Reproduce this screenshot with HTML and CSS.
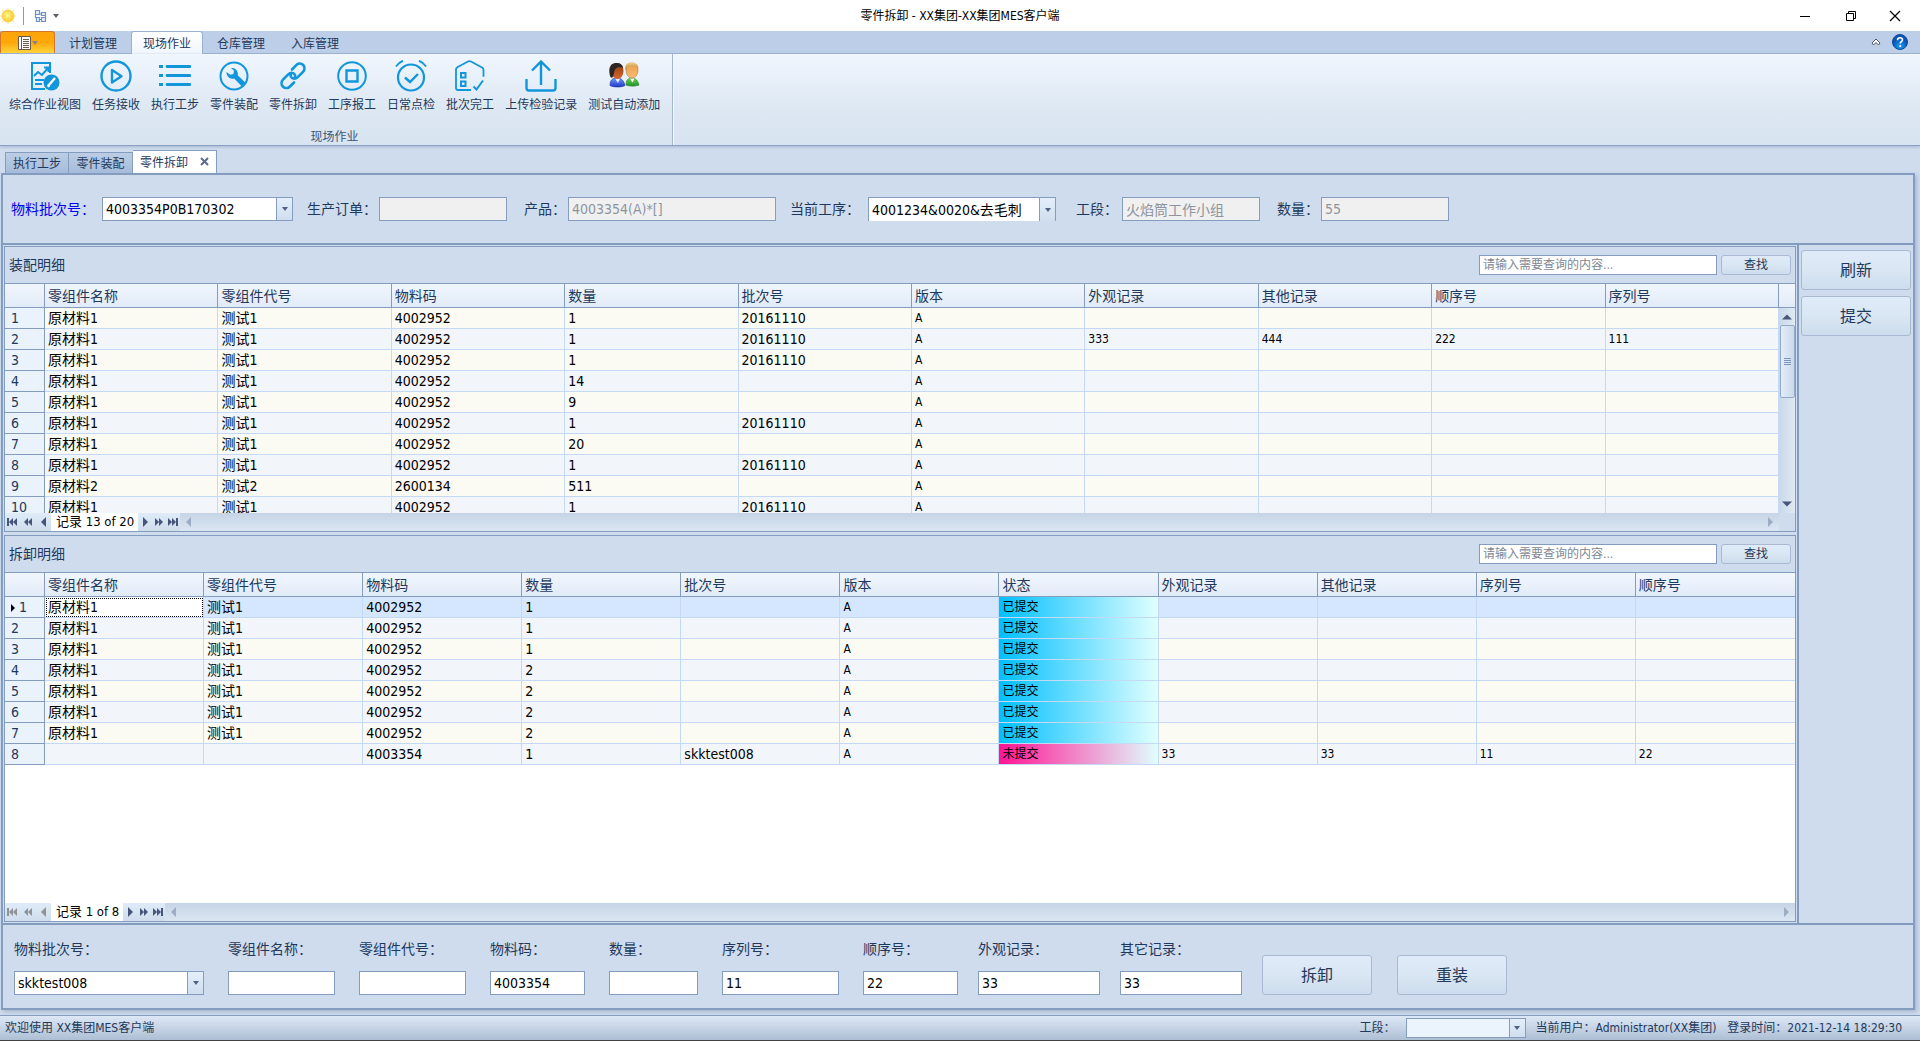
FILE: index.html
```html
<!DOCTYPE html>
<html lang="zh-CN">
<head>
<meta charset="utf-8">
<title>零件拆卸 - XX集团-XX集团MES客户端</title>
<link rel="stylesheet" href="styles.css">
</head>
<body>
<svg class="defs" aria-hidden="true">
  <defs>
    <symbol id="nav-prev" viewBox="0 0 10 10"><path d="M7 0v10L2 5z"/></symbol>
    <symbol id="nav-rew" viewBox="0 0 10 10"><path d="M5 1v8L1 5zM9 1v8L5 5z"/></symbol>
    <symbol id="nav-first" viewBox="0 0 10 10"><path d="M0 1h2v8H0zM6 1v8L2 5zM10 1v8L6 5z"/></symbol>
    <symbol id="nav-next" viewBox="0 0 10 10"><path d="M3 0v10l5-5z"/></symbol>
    <symbol id="nav-fwd" viewBox="0 0 10 10"><path d="M1 1v8l4-4zM5 1v8l4-4z"/></symbol>
    <symbol id="nav-last" viewBox="0 0 10 10"><path d="M8 1h2v8H8zM0 1v8l4-4zM4 1v8l4-4z"/></symbol>
    <radialGradient id="sun" cx="45%" cy="45%"><stop offset="0" stop-color="#fff79a"/><stop offset="1" stop-color="#f6cf28"/></radialGradient>
    <radialGradient id="help" cx="50%" cy="80%"><stop offset="0" stop-color="#1ea0f5"/><stop offset="1" stop-color="#0a55b8"/></radialGradient>
    <linearGradient id="skin-dark" x2="0" y2="1"><stop offset="0" stop-color="#8a3a10"/><stop offset="1" stop-color="#d8662c"/></linearGradient>
    <linearGradient id="skin-light" x2="0" y2="1"><stop offset="0" stop-color="#e89a4a"/><stop offset="1" stop-color="#fbbd72"/></linearGradient>
    <linearGradient id="hair" x2="0" y2="1"><stop offset="0" stop-color="#efcf8c"/><stop offset="1" stop-color="#b9822c"/></linearGradient>
    <linearGradient id="shirt-blue" x2="0" y2="1"><stop offset="0" stop-color="#6d9bff"/><stop offset="1" stop-color="#2338c8"/></linearGradient>
    <linearGradient id="shirt-green" x2="0" y2="1"><stop offset="0" stop-color="#6fd04a"/><stop offset="1" stop-color="#1f9430"/></linearGradient>
  </defs>
</svg>

<header class="titlebar">
  <div class="quick">
    <svg width="16" height="16" viewBox="0 0 16 16"><g stroke="#fbe58a" stroke-width="1"><path d="M8 0v16M0 8h16M2 2l12 12M14 2L2 14"/></g><circle cx="8" cy="8" r="6" fill="url(#sun)" stroke="#f4d254"/></svg>
    <span class="quick-sep"></span>
    <button class="plain" aria-label="布局"><svg width="14" height="14" viewBox="0 0 14 14" fill="#e6eef8" stroke="#6f93c0" stroke-width="1.200"><path d="M1.500 1.500h4v4h-4zM7.500 3.500h4v3h-4zM2.500 8.500h3v4h-3zM7.500 8.500h4v4h-4z"/><path fill="none" d="M1.500 5.500v3h1M5.500 5h2M5.500 10.500h2M11.500 6.500v2"/></svg></button>
    <span class="tri tri-grey"></span>
  </div>
  <h1 class="title">零件拆卸 - XX集团-XX集团MES客户端</h1>
  <div class="winbtns">
    <button class="plain" aria-label="最小化"><svg width="12" height="12" viewBox="0 0 12 12"><path d="M1 6.500h10" stroke="#000"/></svg></button>
    <button class="plain" aria-label="还原"><svg width="12" height="12" viewBox="0 0 12 12" fill="none" stroke="#000"><path d="M1.500 3.500h7v7h-7zM3.500 3.500v-2h7v7h-2"/></svg></button>
    <button class="plain" aria-label="关闭"><svg width="12" height="12" viewBox="0 0 12 12"><path d="M1 1l10 10M11 1L1 11" stroke="#000" stroke-width="1.200"/></svg></button>
  </div>
</header>

<nav class="ribbon-tabs">
  <button class="app-btn" aria-label="应用程序菜单">
    <svg width="13" height="14" viewBox="0 0 13 14"><path d="M.5.5h12v13H.5z" fill="#fff" stroke="#6b5a45"/><path d="M3.500 1v12M5 3.500h6M5 5.500h6M5 7.500h6M5 9.500h6M5 11.500h6" stroke="#6b5a45"/></svg>
    <span class="tri"></span>
  </button>
  <button class="rtab">计划管理</button>
  <button class="rtab active">现场作业</button>
  <button class="rtab">仓库管理</button>
  <button class="rtab">入库管理</button>
  <span class="spacer"></span>
  <button class="plain" aria-label="折叠功能区"><svg width="10" height="8" viewBox="0 0 10 8"><path d="M1 5l4-4 4 4-1.500 2L5 4.500 2.500 7z" fill="#fff" stroke="#4c566c"/></svg></button>
  <button class="plain help" aria-label="帮助"><svg width="16" height="16" viewBox="0 0 16 16"><circle cx="8" cy="8" r="7.500" fill="url(#help)" stroke="#0b4a9c"/><path d="M5.500 6.200C5.500 2.800 10.700 3 10.500 6 10.400 7.600 8.200 7.700 8.200 9.600" fill="none" stroke="#fff" stroke-width="1.600"/><circle cx="8.200" cy="12" r="1" fill="#fff"/></svg></button>
</nav>

<section class="ribbon">
  <div class="rgroup">
    <div class="ritems">
      <button class="ritem"><svg class="ico" viewBox="0 0 32 32"><path d="M21 13V3H3v26h13" /><path d="M5 16l4-4 4 3 6-7M15 7.500h4.500V12M6 20h9M6 24h7"/><circle cx="22.500" cy="22.500" r="8" fill="#1296db" stroke="none"/><path d="M19 26l7-8M18.500 26.500l2-1" stroke="#fff" stroke-width="2.400"/></svg>综合作业视图</button>
      <button class="ritem"><svg class="ico" viewBox="0 0 32 32"><circle cx="16" cy="16" r="14.500" stroke-width="2.400"/><path d="M12 10v12.500l9.500-6.300z" stroke-width="2.400" stroke-linejoin="round"/></svg>任务接收</button>
      <button class="ritem"><svg class="ico" viewBox="0 0 32 32"><path stroke-width="2.800" d="M8 6.500h23M8 15.500h23M8 24.500h23" stroke-linecap="round"/><path stroke-width="3.200" d="M0 6.500h4M0 15.500h4M0 24.500h4"/></svg>执行工步</button>
      <button class="ritem"><svg class="ico" viewBox="0 0 32 32"><circle cx="16" cy="16" r="13.500"/><path fill="#1296db" stroke="none" d="M13 8c3-.6 6 1.400 6.700 4.400.3 1.200.2 2 0 2.900l7.800 7.500-3.600 3.800-7.700-8.200c-3 .9-6-.6-7.200-3.400-.4-1-.5-2-.4-3l3.600 2.800 3.200-.9.600-3.200z"/></svg>零件装配</button>
      <button class="ritem"><svg class="ico" viewBox="0 0 32 32"><path stroke-width="2.600" stroke-linecap="round" d="M15 9.500l4-4.200c2-2 5-2.300 7-.5 2 1.900 2 4.900 0 7l-5.500 5.600c-2 1.900-5 1.900-6.500-.6-.6-1.200-.3-2.800.8-4M17 22.500l-4 4c-2 2-5 2-7 .2-1.900-2-1.900-4.900 0-7l5.500-5.500c2-2 4.700-1.900 6.300.4.700 1.300.4 2.900-.8 4.100"/></svg>零件拆卸</button>
      <button class="ritem"><svg class="ico" viewBox="0 0 32 32"><circle cx="16" cy="16" r="13.800"/><path stroke-width="2.400" d="M10.500 10.500h11v11h-11z"/></svg>工序报工</button>
      <button class="ritem"><svg class="ico" viewBox="0 0 32 32"><circle cx="16" cy="17.500" r="13" stroke-width="2.200"/><path stroke-width="2.400" d="M10 17.500l5 4.500 8-8"/><path d="M1 6.500C3 3.500 5 2 8 .8M31 6.500C29 3.500 27 2 24 .8"/></svg>日常点检</button>
      <button class="ritem"><svg class="ico" viewBox="0 0 32 32"><path d="M17 30H4c-1.500 0-2-1-2-2V9.500c0-1 .5-1.700 1.300-2.200L14 1.500c1-.5 2-.5 3 0l11 6c1 .6 1.500 1.200 1.500 2.200v7" stroke-width="1.800"/><path d="M7 13h4.500v4.500H7zM7 21.500h4.500V26H7zM19.500 26.500l3 3 6.500-9"/></svg>批次完工</button>
      <button class="ritem"><svg class="ico" viewBox="0 0 32 32"><path stroke-width="2.400" d="M1.500 19v9c0 1.500.8 2.500 2.500 2.500h24c1.700 0 2.500-1 2.500-2.500v-9M16 25V2M7 10.500L16 1.500l9 9"/></svg>上传检验记录</button>
      <button class="ritem"><svg class="people" viewBox="0 0 32 32"><path d="M18 25c0-5 2-7 6-7s6 3 7 7c-3 1.500-10 1.500-13 0z" fill="url(#shirt-green)" stroke="#287a28" stroke-width=".6"/><path d="M22 18.500l2.500 4 2-4z" fill="#fff"/><ellipse cx="24" cy="10.500" rx="6" ry="7.500" fill="url(#skin-light)" stroke="#a66a20" stroke-width=".5"/><path d="M17.500 10C16.500 4 19.500 2.500 24 2.500S31 5 30.200 9c-.9-2-1.900-2.500-3-3-3 1-6.200.6-8 1z" fill="url(#hair)"/><path d="M2 25.500c0-5 2-7.500 7-7.500s7 3.500 8 7.500c-4 2-11 2-15 0z" fill="url(#shirt-blue)" stroke="#1c2e9c" stroke-width=".6"/><path d="M7 18.500l3 4.500 2-4.500z" fill="#e8f0ff"/><ellipse cx="9.500" cy="11" rx="6" ry="8" fill="url(#skin-dark)"/><path d="M2 16C-.5 6 4 2.500 9 3c4 .2 6 3 6 5-4-2-7-.8-8.500 2.500C6 13 5.500 16 4.500 17.500 3 18 2.300 17 2 16z" fill="#2b2523"/></svg>测试自动添加</button>
    </div>
    <div class="rcaption">现场作业</div>
  </div>
</section>

<nav class="doc-tabs">
  <button class="dtab">执行工步</button>
  <button class="dtab">零件装配</button>
  <button class="dtab active">零件拆卸<svg width="9" height="9" viewBox="0 0 9 9"><path d="M1 1l7 7M8 1L1 8" stroke="#5a6a90" stroke-width="2"/></svg></button>
</nav>

<main class="main">
  <form class="filters">
    <label class="blue" for="f1">物料批次号：</label>
    <span class="combo w191"><select id="f1"><option>4003354P0B170302</option></select><i class="arrow"></i></span>
    <label for="f2">生产订单：</label><input id="f2" class="w128" disabled>
    <label for="f3" class="lead">产品：</label><input id="f3" class="w208" value="4003354(A)*[]" disabled>
    <label for="f4" class="op">当前工序：</label>
    <span class="combo w188 raised"><select id="f4"><option>4001234&amp;0020&amp;去毛刺</option></select><i class="arrow"></i></span>
    <label for="f5" class="lead wide">工段：</label><input id="f5" class="w138" value="火焰筒工作小组" disabled>
    <label for="f6" class="lead">数量：</label><input id="f6" class="w128" value="55" disabled>
  </form>

  <div class="middle">
    <div class="grids">
      <section class="panel panel-a">
        <div class="panel-head"><h2>装配明细</h2><input class="search" aria-label="查询装配明细" placeholder="请输入需要查询的内容..."><button class="btn find">查找</button></div>
        <div class="body">
          <div class="scroller">
            <table>
              <colgroup><col class="c-ind"><col span="10"></colgroup>
              <thead><tr><th></th><th>零组件名称</th><th>零组件代号</th><th>物料码</th><th>数量</th><th>批次号</th><th>版本</th><th>外观记录</th><th>其他记录</th><th>顺序号</th><th>序列号</th></tr></thead>
              <tbody>
                <tr><th>1</th><td>原材料1</td><td>测试1</td><td>4002952</td><td>1</td><td>20161110</td><td class="s">A</td><td></td><td></td><td></td><td></td></tr>
                <tr><th>2</th><td>原材料1</td><td>测试1</td><td>4002952</td><td>1</td><td>20161110</td><td class="s">A</td><td class="s">333</td><td class="s">444</td><td class="s">222</td><td class="s">111</td></tr>
                <tr><th>3</th><td>原材料1</td><td>测试1</td><td>4002952</td><td>1</td><td>20161110</td><td class="s">A</td><td></td><td></td><td></td><td></td></tr>
                <tr><th>4</th><td>原材料1</td><td>测试1</td><td>4002952</td><td>14</td><td></td><td class="s">A</td><td></td><td></td><td></td><td></td></tr>
                <tr><th>5</th><td>原材料1</td><td>测试1</td><td>4002952</td><td>9</td><td></td><td class="s">A</td><td></td><td></td><td></td><td></td></tr>
                <tr><th>6</th><td>原材料1</td><td>测试1</td><td>4002952</td><td>1</td><td>20161110</td><td class="s">A</td><td></td><td></td><td></td><td></td></tr>
                <tr><th>7</th><td>原材料1</td><td>测试1</td><td>4002952</td><td>20</td><td></td><td class="s">A</td><td></td><td></td><td></td><td></td></tr>
                <tr><th>8</th><td>原材料1</td><td>测试1</td><td>4002952</td><td>1</td><td>20161110</td><td class="s">A</td><td></td><td></td><td></td><td></td></tr>
                <tr><th>9</th><td>原材料2</td><td>测试2</td><td>2600134</td><td>511</td><td></td><td class="s">A</td><td></td><td></td><td></td><td></td></tr>
                <tr><th>10</th><td>原材料1</td><td>测试1</td><td>4002952</td><td>1</td><td>20161110</td><td class="s">A</td><td></td><td></td><td></td><td></td></tr>
              </tbody>
            </table>
          </div>
          <div class="vbar">
            <div class="vbar-head"></div>
            <svg class="varrow" viewBox="0 0 10 6"><path d="M0 5.500L5 .5l5 5z"/></svg>
            <div class="thumb"></div>
            <span class="spacer"></span>
            <svg class="varrow" viewBox="0 0 10 6"><path d="M0 .5l5 5 5-5z"/></svg>
          </div>
        </div>
        <div class="navrow">
          <div class="pager">
            <button class="plain" aria-label="首条"><svg><use href="#nav-first"/></svg></button><button class="plain" aria-label="上一页"><svg><use href="#nav-rew"/></svg></button><button class="plain" aria-label="上一条"><svg><use href="#nav-prev"/></svg></button>
            <span class="record">记录 13 of 20</span>
            <button class="plain" aria-label="下一条"><svg><use href="#nav-next"/></svg></button><button class="plain" aria-label="下一页"><svg><use href="#nav-fwd"/></svg></button><button class="plain" aria-label="末条"><svg><use href="#nav-last"/></svg></button>
          </div>
          <div class="hbar"><svg><use href="#nav-prev"/></svg><svg><use href="#nav-next"/></svg></div>
          <div class="corner"></div>
        </div>
      </section>

      <section class="panel panel-b">
        <div class="panel-head"><h2>拆卸明细</h2><input class="search" aria-label="查询拆卸明细" placeholder="请输入需要查询的内容..."><button class="btn find">查找</button></div>
        <div class="body">
          <div class="scroller">
            <table>
              <colgroup><col class="c-ind"><col span="11"></colgroup>
              <thead><tr><th></th><th>零组件名称</th><th>零组件代号</th><th>物料码</th><th>数量</th><th>批次号</th><th>版本</th><th>状态</th><th>外观记录</th><th>其他记录</th><th>序列号</th><th>顺序号</th></tr></thead>
              <tbody>
                <tr class="selected"><th><i class="cursor"></i>1</th><td class="focus">原材料1</td><td>测试1</td><td>4002952</td><td>1</td><td></td><td class="s">A</td><td class="s done">已提交</td><td></td><td></td><td></td><td></td></tr>
                <tr><th>2</th><td>原材料1</td><td>测试1</td><td>4002952</td><td>1</td><td></td><td class="s">A</td><td class="s done">已提交</td><td></td><td></td><td></td><td></td></tr>
                <tr><th>3</th><td>原材料1</td><td>测试1</td><td>4002952</td><td>1</td><td></td><td class="s">A</td><td class="s done">已提交</td><td></td><td></td><td></td><td></td></tr>
                <tr><th>4</th><td>原材料1</td><td>测试1</td><td>4002952</td><td>2</td><td></td><td class="s">A</td><td class="s done">已提交</td><td></td><td></td><td></td><td></td></tr>
                <tr><th>5</th><td>原材料1</td><td>测试1</td><td>4002952</td><td>2</td><td></td><td class="s">A</td><td class="s done">已提交</td><td></td><td></td><td></td><td></td></tr>
                <tr><th>6</th><td>原材料1</td><td>测试1</td><td>4002952</td><td>2</td><td></td><td class="s">A</td><td class="s done">已提交</td><td></td><td></td><td></td><td></td></tr>
                <tr><th>7</th><td>原材料1</td><td>测试1</td><td>4002952</td><td>2</td><td></td><td class="s">A</td><td class="s done">已提交</td><td></td><td></td><td></td><td></td></tr>
                <tr><th>8</th><td></td><td></td><td>4003354</td><td>1</td><td>skktest008</td><td class="s">A</td><td class="s open">未提交</td><td class="s">33</td><td class="s">33</td><td class="s">11</td><td class="s">22</td></tr>
              </tbody>
            </table>
          </div>
        </div>
        <div class="navrow">
          <div class="pager">
            <button class="plain off" aria-label="首条"><svg><use href="#nav-first"/></svg></button><button class="plain off" aria-label="上一页"><svg><use href="#nav-rew"/></svg></button><button class="plain off" aria-label="上一条"><svg><use href="#nav-prev"/></svg></button>
            <span class="record">记录 1 of 8</span>
            <button class="plain" aria-label="下一条"><svg><use href="#nav-next"/></svg></button><button class="plain" aria-label="下一页"><svg><use href="#nav-fwd"/></svg></button><button class="plain" aria-label="末条"><svg><use href="#nav-last"/></svg></button>
          </div>
          <div class="hbar"><svg><use href="#nav-prev"/></svg><svg><use href="#nav-next"/></svg></div>
        </div>
      </section>
    </div>
    <aside class="actions">
      <button class="btn big">刷新</button>
      <button class="btn big">提交</button>
    </aside>
  </div>

  <form class="edit">
    <div class="field"><label for="e1">物料批次号：</label><span class="combo"><select id="e1"><option>skktest008</option></select><i class="arrow"></i></span></div>
    <div class="field"><label for="e2">零组件名称：</label><input id="e2"></div>
    <div class="field"><label for="e3">零组件代号：</label><input id="e3"></div>
    <div class="field"><label for="e4">物料码：</label><input id="e4" value="4003354"></div>
    <div class="field"><label for="e5">数量：</label><input id="e5"></div>
    <div class="field"><label for="e6">序列号：</label><input id="e6" value="11"></div>
    <div class="field narrow"><label for="e7">顺序号：</label><input id="e7" value="22"></div>
    <div class="field narrow"><label for="e8">外观记录：</label><input id="e8" value="33"></div>
    <div class="field narrow"><label for="e9">其它记录：</label><input id="e9" value="33"></div>
    <div class="edit-btns"><button type="button" class="btn big">拆卸</button><button type="button" class="btn big">重装</button></div>
  </form>
</main>

<footer class="status">
  <span>欢迎使用 XX集团MES客户端</span>
  <span class="spacer"></span>
  <label for="st">工段：</label>
  <span class="combo"><select id="st"><option></option></select><i class="arrow"></i></span>
  <span class="user">当前用户：Administrator(XX集团)</span>
  <span>登录时间：2021-12-14 18:29:30</span>
</footer>
</body>
</html>
```
FILE: styles.css
```css
:root {
  --line: #849dbf;
  --cell: #c3d9f5;
  --bg: #cfdcee;
  --text: #1e395b;
  --blue: #1296db;
}

* { box-sizing: border-box; }

body {
  margin: 0;
  height: 100vh;
  display: flex;
  flex-direction: column;
  overflow: hidden;
  background: var(--bg);
  color: var(--text);
  font-family: "DejaVu Sans Condensed", "Noto Sans CJK SC", sans-serif;
  font-size: 12px;
  line-height: 16px;
}

button, input, select { font: inherit; color: inherit; margin: 0; }
h1, h2 { margin: 0; font-weight: normal; }
.defs { position: absolute; width: 0; height: 0; }
.spacer { flex: 1; }

.plain {
  display: flex;
  align-items: center;
  justify-content: center;
  padding: 0;
  border: 0;
  background: none;
}

.tri {
  border: 3px solid transparent;
  border-top: 4px solid #8d8578;
  border-bottom: 0;
}
.tri-grey { border-top-color: #5a6068; }

/* Title bar */
.titlebar {
  flex: none;
  display: grid;
  grid-template-columns: 1fr auto 1fr;
  align-items: center;
  height: 31px;
  background: #fff;
  color: #000;
}
.quick { display: flex; align-items: center; }
.quick-sep { width: 1px; height: 18px; margin: 0 10px 0 7px; background: #8d99ad; }
.quick .tri { margin-left: 5px; }
.title { font-size: 12px; }
.winbtns { display: flex; justify-content: flex-end; }
.winbtns .plain { width: 46px; height: 28px; }
.winbtns .plain:last-child { padding-right: 4px; }

/* Ribbon */
.ribbon-tabs {
  flex: none;
  display: flex;
  gap: 2px;
  height: 23px;
  padding-right: 3px;
  background: #bdcfe8;
  border-bottom: 1px solid #9ab0cf;
}
.app-btn {
  display: flex;
  align-items: center;
  justify-content: center;
  gap: 1px;
  width: 55px;
  padding: 0;
  border: 1px solid #d3762b;
  border-bottom: 0;
  border-radius: 3px 3px 0 0;
  background: linear-gradient(#fba40c, #fda80a 50%, #ffd33a);
}
.rtab {
  height: 23px;
  padding: 2px 11px 0;
  border: 1px solid transparent;
  border-bottom: 0;
  background: none;
}
.rtab.active {
  border-color: #9ab0cf;
  border-radius: 3px 3px 0 0;
  background: linear-gradient(#fff, #f0f6fd);
}
.help { width: 34px; }
.ribbon {
  flex: none;
  display: flex;
  height: 92px;
  background: linear-gradient(#f0f6fe, #dce7f2 65%, #d8e4f1);
  border-bottom: 1px solid #8b9fbf;
  box-shadow: 0 1px 3px #a7b7cf;
}
.rgroup {
  display: flex;
  flex-direction: column;
  justify-content: space-between;
  padding: 6px 12px 0 9px;
  border-right: 1px solid #a3b5d0;
  box-shadow: 1px 0 #f3f8fe;
}
.ritems { display: flex; gap: 11px; }
.ritem {
  display: flex;
  flex-direction: column;
  align-items: center;
  gap: 5px;
  padding: 0;
  border: 0;
  background: none;
}
.ico { width: 32px; height: 32px; fill: none; stroke: var(--blue); stroke-width: 2; }
.people { width: 32px; height: 32px; }
.rcaption { text-align: center; color: #3b5578; }

/* Document tabs */
.doc-tabs {
  flex: none;
  display: flex;
  align-items: flex-end;
  height: 27px;
  padding-left: 5px;
}
.dtab {
  height: 21px;
  width: 64px;
  padding: 2px 0 0;
  border: 1px solid var(--line);
  border-bottom: 0;
  background: linear-gradient(#bccde4, #a6bcda);
}
.dtab + .dtab { border-left: 0; }
.dtab.active {
  display: flex;
  align-items: flex-start;
  justify-content: space-between;
  width: 84px;
  height: 23px;
  padding: 4px 7px;
  background: #fff;
}
.dtab svg { margin-top: 2px; }

/* Main frame */
.main {
  flex: 1;
  min-height: 0;
  display: flex;
  flex-direction: column;
  margin: 0 5px 5px 1px;
  border: 2px solid var(--line);
  box-shadow: 2px 2px 4px #a9b8d0;
  font-size: 14px;
  line-height: 20px;
}

input, .combo {
  height: 24px;
  border: 1px solid var(--line);
  border-radius: 0;
  background: #fff;
  color: #000;
}
input { padding: 0 3px; outline: 0; }
input:disabled { background: #f0f0f0; color: #8d949e; }
.combo { display: flex; position: relative; }
.combo select {
  flex: 1;
  min-width: 0;
  height: 100%;
  padding: 0 3px;
  border: 0;
  border-radius: 0;
  outline: 0;
  appearance: none;
  background: none;
}
.arrow {
  display: flex;
  align-items: center;
  justify-content: center;
  width: 16px;
  border-left: 1px solid var(--line);
  background: linear-gradient(#e3effb, #cfdeee);
  pointer-events: none;
}
.arrow::before {
  content: "";
  border: 3px solid transparent;
  border-top: 4px solid #4f6285;
  border-bottom: 0;
}

.filters {
  flex: none;
  display: flex;
  align-items: center;
  height: 70px;
  padding: 0 8px;
  border-bottom: 2px solid var(--line);
}
.filters label { width: 72px; margin-left: 14px; white-space: nowrap; }
.filters label.blue { width: 91px; margin-left: 0; color: #0000f0; }
.filters label.lead { width: 44px; margin-left: 17px; }
.filters label.wide { width: 46px; margin-left: 20px; }
.filters label.op { width: 78px; }
.w128 { width: 128px; }
.w138 { width: 138px; }
.w188 { width: 188px; }
.w191 { width: 191px; }
.w208 { width: 208px; }
.combo.raised { border-bottom: 0; }

/* Grids */
.middle {
  flex: 1;
  min-height: 0;
  display: flex;
  border-bottom: 2px solid var(--line);
}
.grids {
  flex: 1;
  min-width: 0;
  display: flex;
  flex-direction: column;
  gap: 3px;
  padding: 1px;
  border-right: 2px solid var(--line);
}
.panel {
  min-height: 0;
  display: flex;
  flex-direction: column;
  border: 1px solid var(--line);
}
.panel-a { flex: 286 1 0; }
.panel-b { flex: 387 1 0; }
.panel-head {
  flex: none;
  display: flex;
  align-items: center;
  gap: 4px;
  height: 37px;
  padding: 0 4px;
  border-bottom: 1px solid var(--line);
}
.panel-head h2 { flex: 1; font-size: 14px; line-height: 20px; }
.search { width: 238px; height: 20px; font-size: 12px; }
.search::placeholder { color: #808893; opacity: 1; }

.btn {
  padding: 0;
  border: 1px solid #a9b9d3;
  border-radius: 3px;
  background: linear-gradient(#dfebf8, #d9e6f3 50%, #cddded);
}
.btn.find { width: 70px; height: 20px; font-size: 12px; line-height: 16px; }
.btn.big { width: 110px; height: 40px; padding-top: 2px; font-size: 16px; }

.body { flex: 1; min-height: 0; display: flex; background: #fff; }
.scroller { flex: 1; min-width: 0; overflow: hidden; }
table {
  width: 100%;
  table-layout: fixed;
  border-collapse: separate;
  border-spacing: 0;
}
.c-ind { width: 40px; }
th, td {
  height: 21px;
  padding: 0 0 0 3px;
  text-align: left;
  font-weight: normal;
  line-height: 20px;
  white-space: nowrap;
  overflow: hidden;
}
td { color: #000; border-right: 1px solid var(--cell); border-bottom: 1px solid var(--cell); }
td.s { font-size: 12px; }
th { border-right: 1px solid var(--line); border-bottom: 1px solid var(--line); }
thead th { height: 24px; background: linear-gradient(#f1f6fd, #e1ebf8); }
tbody th { padding-left: 6px; background: #eaf2fc; }
tbody tr { background: #f2f5fa; }
tbody tr:nth-child(odd) { background: #fbfbf3; }
tbody tr.selected { background: #d5e7ff; }
.panel-b th:last-child, .panel-b td:last-child { border-right: 0; }
tbody th:first-child { border-right: 1px solid var(--line); }
td.focus { background: #fff; outline: 1px dotted #000; outline-offset: -2px; }
td.done { background: linear-gradient(90deg, #00bfff, #e0ffff) padding-box; }
td.open { background: linear-gradient(90deg, #ff1493, #e0ffff) padding-box; }
.cursor {
  display: inline-block;
  margin-right: 4px;
  border: 4px solid transparent;
  border-left-color: #000;
  border-right: 0;
}

.vbar {
  display: flex;
  flex-direction: column;
  align-items: center;
  width: 16px;
  padding-bottom: 6px;
  background: linear-gradient(90deg, #c9d8ea, #dfe9f4);
}
.vbar-head {
  flex: none;
  width: 100%;
  height: 24px;
  margin-bottom: 6px;
  border-bottom: 1px solid var(--line);
  background: linear-gradient(#f1f6fd, #e1ebf8);
}
.varrow { flex: none; width: 10px; height: 6px; fill: #46557c; }
.thumb {
  display: flex;
  align-items: center;
  justify-content: center;
  width: 15px;
  height: 73px;
  margin-top: 5px;
  border: 1px solid #93a9c9;
  border-radius: 2px;
  background: linear-gradient(90deg, #e3edf8, #cbd9eb);
}
.thumb::before {
  content: "";
  width: 7px;
  height: 7px;
  background: repeating-linear-gradient(#7d95bb 0 1px, transparent 1px 2px);
}

.navrow { flex: none; display: flex; height: 18px; }
.navrow svg { width: 10px; height: 10px; fill: #46557c; }
.pager { display: flex; background: linear-gradient(#dfebf8, #cfddec); }
.pager .plain { width: 14px; }
.pager .plain:nth-child(2) { width: 17px; }
.pager .plain:nth-child(3) { width: 15px; }
.pager .off svg { fill: #8f9296; }
.record {
  padding: 0 4px 0 5px;
  background: #fff;
  color: #000;
  font-size: 13px;
  line-height: 18px;
}
.hbar {
  flex: 1;
  display: flex;
  align-items: center;
  justify-content: space-between;
  padding: 0 4px;
  background: linear-gradient(#c5d4e6, #dbe6f2);
}
.hbar svg { fill: #9dacc4; }
.corner { width: 16px; }

/* Right-hand actions */
.actions {
  display: flex;
  flex-direction: column;
  gap: 6px;
  padding: 5px 2px;
}

/* Entry form */
.edit {
  flex: none;
  display: grid;
  grid-template-columns: 214px 131px 131px 119px 113px 141px 115px 142px 142px 1fr;
  align-items: end;
  height: 83px;
  padding: 0 11px 13px;
}
.field { display: flex; flex-direction: column; gap: 12px; padding-right: 24px; }
.field.narrow { padding-right: 20px; }
.field label { white-space: nowrap; }
.field input { width: 100%; }
.edit-btns { display: flex; gap: 25px; }

/* Status bar */
.status {
  flex: none;
  display: flex;
  align-items: center;
  height: 26px;
  padding: 0 18px 0 5px;
  border-top: 1px solid var(--line);
  border-bottom: 1px solid #444;
  background: linear-gradient(#dde8f6, #adbfd4);
}
.status .combo { width: 120px; height: 20px; margin: 0 10px; background: #ebf3fc; }
.user { margin-right: 11px; }
```
